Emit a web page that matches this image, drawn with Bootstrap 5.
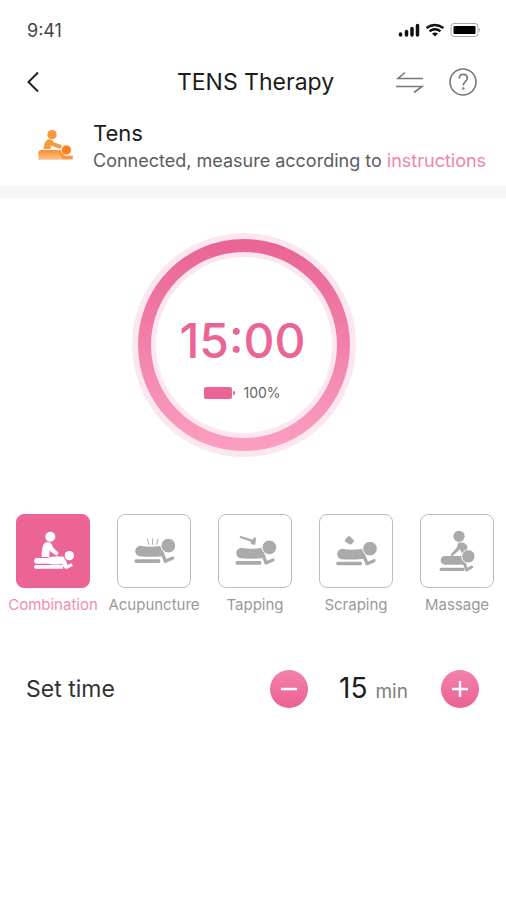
<!DOCTYPE html>
<html lang="en">
<head>
<meta charset="utf-8">
<meta name="viewport" content="width=device-width, initial-scale=1">
<title>TENS Therapy</title>
<link href="https://cdn.jsdelivr.net/npm/bootstrap@5.3.0/dist/css/bootstrap.min.css" rel="stylesheet">
<style>
  :root { --pink: #eb6495; --ink: #1c1c1c; }
  body { font-family: Inter, "Liberation Sans", sans-serif; color: var(--ink); background: #fff; min-height: 100vh; }
  svg { display: block; flex: none; }
  .status-bar { height: 58px; padding: 2px 25px 0 27px; font-size: 18px; color: #444; }
  .title-bar { height: 48px; padding: 0 29px 0 22px; }
  .title-bar .side { flex: 1 1 0; }
  .title-bar .side-start { flex-basis: 12px; }
  .title-bar h1 { font-size: 23px; line-height: 28px; font-weight: 400; }
  .icon-btn { background: none; border: 0; padding: 0; }
  .device { height: 80px; padding: 13px 12px 0 37px; gap: 19px; }
  .device h2 { font-size: 22px; line-height: 28px; font-weight: 400; }
  .device p { font-size: 18px; line-height: 28px; color: #5c5c5c; white-space: nowrap; }
  .device a { color: #ef82aa; text-decoration: none; }
  .divider { height: 12px; background: #f7f7f7; }
  .timer { padding: 35px 18px 0 0; }
  .dial { display: grid; width: 224px; height: 224px; }
  .dial > * { grid-area: 1 / 1; }
  .dial-text { padding: 25px 3px 0 0; }
  .clock { font-size: 48px; line-height: 56px; font-weight: 500; color: var(--pink); }
  .charge { font-size: 14px; line-height: 20px; color: #666; gap: 7px; margin-top: 14px; }
  .modes { padding: 57px 12px 0 16px; }
  .mode { width: 74px; padding: 0; border: 0; background: none; color: #999; font-size: 15px; line-height: 20px; gap: 7px; white-space: nowrap; }
  .tile { width: 74px; height: 74px; border: 1px solid #bdbdbd; border-radius: 8px; color: #aaa; }
  .mode.active { color: #f28bb0; }
  .mode.active .tile { background: var(--pink); border-color: var(--pink); color: #fff; }
  .set-time { padding: 54px 27px 0 26px; }
  .set-time label { font-size: 23px; line-height: 34px; color: #333; }
  .stepper { width: 209px; }
  .step { width: 38px; height: 38px; padding: 0; border: 0; color: #fff; background: linear-gradient(#f282aa, #ec6095); }
  .amount { font-size: 28px; line-height: 34px; padding: 2px 2px 0 0; }
  .unit { font-size: 19px; color: #808080; }
</style>
<script src="https://cdn.jsdelivr.net/npm/bootstrap@5.3.0/dist/js/bootstrap.bundle.min.js"></script>
</head>
<body>
<div class="status-bar d-flex align-items-center justify-content-between">
  <span>9:41</span>
  <svg width="83" height="16" viewBox="0 0 83 16" aria-hidden="true">
    <g stroke="#111" stroke-width="3.500" stroke-linecap="round"><path d="M2.500 12v1M8.500 9.500v3.500M14 6.500v6.500M19.500 3.500v9.500"/></g>
    <g fill="none" stroke="#111" stroke-width="2.400"><path d="M28.500 6q8-6 17 0M31.500 9.300q5.500-4 11 0"/></g>
    <path d="M34 11.600q3-2 6 0l-3 3z" fill="#111"/>
    <rect x="53" y="1.500" width="27" height="13" rx="3" fill="#fff" stroke="#aaa"/>
    <rect x="55.500" y="4" width="22" height="8" rx="1" fill="#000"/>
    <path d="M81 6q2 2 0 4z" fill="#aaa"/>
  </svg>
</div>
<header class="title-bar d-flex align-items-center">
  <div class="side side-start">
    <button class="icon-btn d-flex" aria-label="Back"><svg width="22" height="24" viewBox="0 0 22 24" fill="none" stroke="#222" stroke-width="2"><path d="M16 2.500 6.500 12l9.500 9.500"/></svg></button>
  </div>
  <h1 class="m-0">TENS Therapy</h1>
  <div class="side d-flex justify-content-end align-items-center gap-4">
    <button class="icon-btn" aria-label="Switch"><svg width="30" height="24" viewBox="0 0 30 24" fill="none" stroke="#777" stroke-width="1.600"><path d="M28 8.500H3L10 2.500M1 16.500h26L19 22.500"/></svg></button>
    <button class="icon-btn" aria-label="Help"><svg width="28" height="28" viewBox="0 0 28 28" fill="none" stroke="#777" stroke-width="1.600"><circle cx="14" cy="14" r="13"/><path d="M10.300 10.500c0-5.600 8-5.300 8-.3 0 3.200-4 3.300-4 7.300"/><circle cx="14.300" cy="20.500" r=".5"/></svg></button>
  </div>
</header>
<section class="device d-flex">
  <svg class="mt-2" width="37" height="37" viewBox="111 56 111 111" aria-hidden="true">
    <defs><linearGradient id="orangeFade" x1="0" y1="0" x2="0" y2="1"><stop offset="0" stop-color="#f98b2b"/><stop offset="1" stop-color="#fdc48e"/></linearGradient></defs>
    <circle cx="156" cy="79" r="14" fill="#f9993f"/>
    <path d="M130 122q4-27 16-29 10-2 16 9l24 9-5 11-27-10-3 10z" fill="#f9993f"/>
    <path d="M115 135q0-10 10-10h57l13 17h23v12H115z" fill="url(#orangeFade)"/>
    <path d="M172 125h12l12 17h22v10h-31z" fill="#f9993f"/>
    <circle cx="199" cy="125" r="15" fill="#f9801c" stroke="#fff" stroke-width="2"/>
  </svg>
  <div>
    <h2 class="m-0">Tens</h2>
    <p class="m-0">Connected, measure according to <a href="#">instructions</a></p>
  </div>
</section>
<div class="divider"></div>
<main>
  <section class="timer d-flex justify-content-center">
    <div class="dial">
      <svg width="224" height="224" viewBox="0 0 224 224" fill="none" aria-hidden="true">
        <defs><linearGradient id="ringFade" x1="0" y1="0" x2="0" y2="1"><stop offset="0" stop-color="#e96395"/><stop offset="1" stop-color="#fb9fc1"/></linearGradient></defs>
        <circle cx="112" cy="112" r="101" stroke="#fde7ef" stroke-width="22"/>
        <circle cx="112" cy="112" r="93" stroke="#fde7ef" stroke-width="10"/>
        <path fill="url(#ringFade)" fill-rule="evenodd" d="M112 6a106 106 0 1 0 0 212a106 106 0 1 0 0-212zm0 13a93 93 0 1 1 0 186a93 93 0 1 1 0-186z"/>
      </svg>
      <div class="dial-text d-flex flex-column align-items-center justify-content-center">
        <div class="clock">15:00</div>
        <div class="charge d-flex align-items-center">
          <svg width="32" height="12" viewBox="0 0 32 12" fill="#eb6495" aria-hidden="true"><rect width="28" height="12" rx="2"/><rect x="29" y="4" width="2" height="4" rx="1"/></svg>
          <span>100%</span>
        </div>
      </div>
    </div>
  </section>
  <section class="modes d-flex justify-content-between">
    <button class="mode active d-flex flex-column align-items-center">
      <span class="tile"><svg viewBox="52 44 216 216" fill="currentColor" aria-hidden="true">
        <circle cx="152" cy="109" r="15"/>
        <path d="M126 170q-1-42 16-45 13-2 18 16l17 17-6 8-17-11-4-5-1 20z"/>
        <path d="M108 173h36q15-8 52-4l7 25 12-5 5 7-17 9q-8 2-11-5l-5-10q-20 5-38 0h-41q-10-8 0-17zM107 194h83v11h-83q-8-5 0-11z"/>
        <circle cx="209" cy="166" r="17" fill="#eb6495"/><circle cx="209" cy="166" r="14"/>
      </svg></span>
      <span>Combination</span>
    </button>
    <button class="mode d-flex flex-column align-items-center">
      <span class="tile"><svg viewBox="355 44 216 216" fill="currentColor" aria-hidden="true">
        <path d="M421 136Q450 142 479 137L488 140V168Q450 171 421 168C402 165 402 139 421 136zM408 177h72q5 5 0 11h-72q-8-5 0-11z"/>
        <path d="M483 145 497 183 519 173" fill="none" stroke="currentColor" stroke-width="10" stroke-linecap="round" stroke-linejoin="round"/>
        <circle cx="506" cy="136" r="22" stroke="#fff" stroke-width="3"/>
        <path d="M443 116l5 17M459 114v19M475 116l-4 17" fill="none" stroke="currentColor" stroke-width="3"/>
      </svg></span>
      <span>Acupuncture</span>
    </button>
    <button class="mode d-flex flex-column align-items-center">
      <span class="tile"><svg viewBox="58 44 216 216" fill="currentColor" aria-hidden="true">
        <path d="M124 142Q153 148 182 143L191 146V173Q153 177 124 174C105 171 105 145 124 142zM111 182h72q5 5 0 11h-72q-8-5 0-11z"/>
        <path d="M186 151 199 188 220 179" fill="none" stroke="currentColor" stroke-width="10" stroke-linecap="round" stroke-linejoin="round"/>
        <circle cx="209" cy="141" r="22" stroke="#fff" stroke-width="3"/>
        <path d="M121 106l-1 6 34 12-1 6 10 4 4-2 2-19-6-3-3 8z"/>
      </svg></span>
      <span>Tapping</span>
    </button>
    <button class="mode d-flex flex-column align-items-center">
      <span class="tile"><svg viewBox="361 44 216 216" fill="currentColor" aria-hidden="true">
        <path d="M427 145Q456 151 485 146L493 149V175Q456 179 427 177C408 174 408 148 427 145zM413 184h72q5 5 0 11h-72q-8-5 0-11z"/>
        <path d="M488 154 502 190 523 181" fill="none" stroke="currentColor" stroke-width="10" stroke-linecap="round" stroke-linejoin="round"/>
        <circle cx="511" cy="145" r="22" stroke="#fff" stroke-width="3"/>
        <path d="M449 107l14 13q-2 10-12 13l-16-10q3-12 14-16z"/>
      </svg></span>
      <span>Scraping</span>
    </button>
    <button class="mode d-flex flex-column align-items-center">
      <span class="tile"><svg viewBox="64 44 216 216" fill="currentColor" aria-hidden="true">
        <circle cx="178" cy="108" r="17"/>
        <path d="M176 127Q197 123 203 138 205 152 200 164L186 157 181 147 158 168 152 164 171 142z"/>
        <path d="M134 167H188L193 171V193H134C119 190 119 170 134 167zM123 202h70q5 5 0 10h-70q-8-4 0-10z"/>
        <path d="M189 174 201 209 216 200" fill="none" stroke="currentColor" stroke-width="9" stroke-linecap="round" stroke-linejoin="round"/>
        <circle cx="206" cy="168" r="20" stroke="#fff" stroke-width="3"/>
      </svg></span>
      <span>Massage</span>
    </button>
  </section>
  <section class="set-time d-flex justify-content-between align-items-center">
    <label for="minutes">Set time</label>
    <div class="stepper d-flex justify-content-between align-items-center">
      <button class="step rounded-circle d-flex align-items-center justify-content-center" aria-label="Less time"><svg width="16" height="16" viewBox="0 0 16 16" stroke="currentColor" stroke-width="2.500"><path d="M0 8h16"/></svg></button>
      <output id="minutes" class="amount">15 <span class="unit">min</span></output>
      <button class="step rounded-circle d-flex align-items-center justify-content-center" aria-label="More time"><svg width="16" height="16" viewBox="0 0 16 16" stroke="currentColor" stroke-width="2.500"><path d="M0 8h16M8 0v16"/></svg></button>
    </div>
  </section>
</main>
</body>
</html>
